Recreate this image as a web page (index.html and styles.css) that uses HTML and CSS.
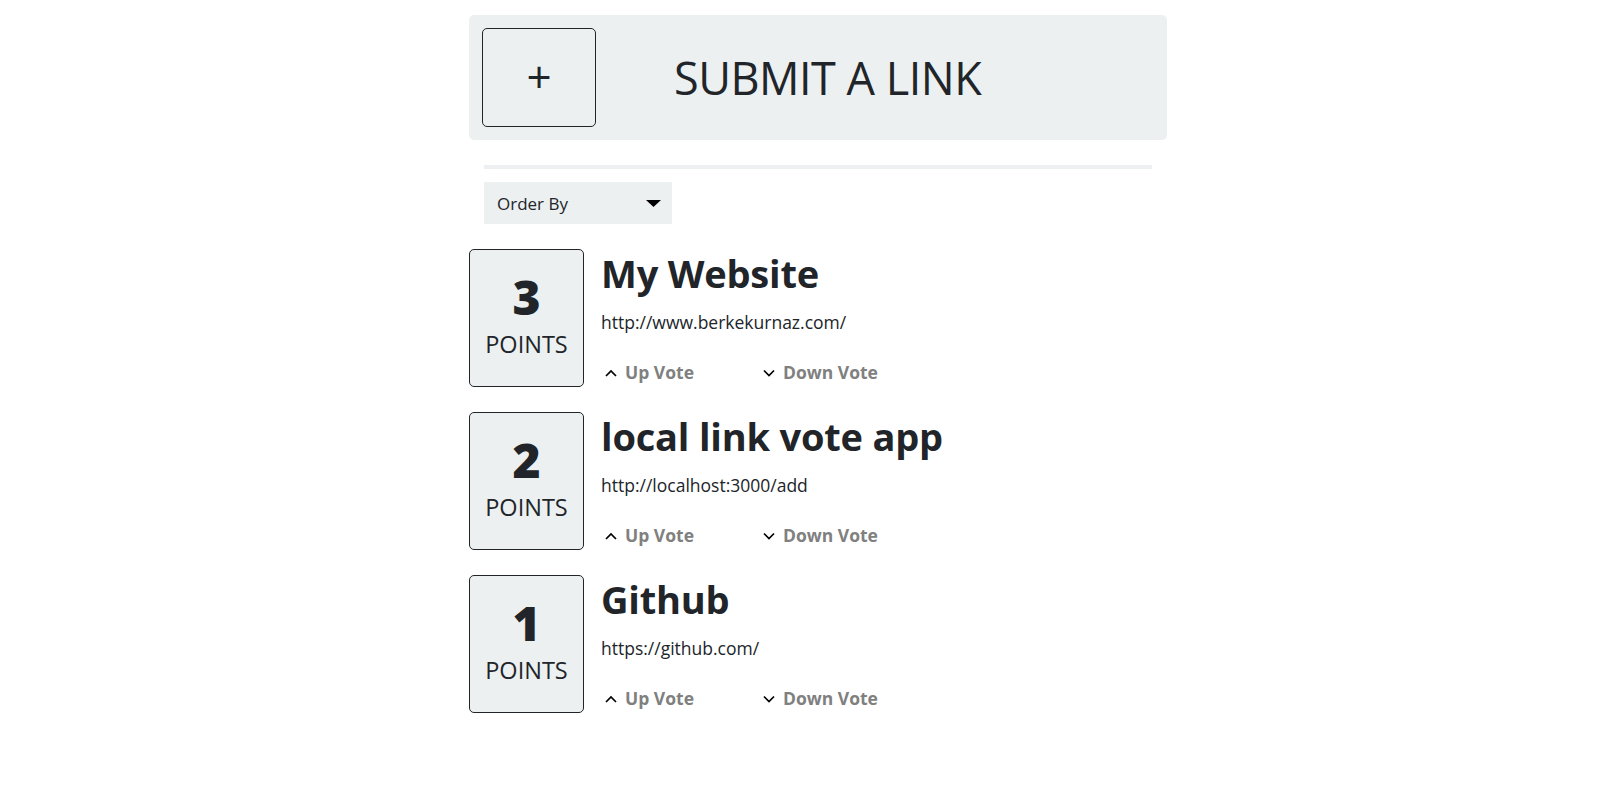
FILE: index.html
```html
<!DOCTYPE html>
<html lang="en">
<head>
<meta charset="utf-8">
<title>Link Vote</title>
<link rel="stylesheet" href="styles.css">
</head>
<body>
<main class="page">
  <section class="banner">
    <div class="plus-box">+</div>
    <h2 class="banner-title">SUBMIT A LINK</h2>
  </section>
  <hr class="divider">
  <div class="order">
    <span>Order By</span>
    <svg class="caret" width="15" height="7" viewBox="0 0 15 7"><polygon points="0,0 15,0 7.5,7" fill="#000"/></svg>
  </div>
  <ul class="list">
    <li class="item">
      <div class="score"><span class="num">3</span><span class="label">POINTS</span></div>
      <div class="details">
        <h1 class="title">My Website</h1>
        <div class="url">http://www.berkekurnaz.com/</div>
        <div class="votes">
          <span class="vote"><svg width="12" height="8" viewBox="0 0 12 8"><polyline points="1,7 6,2 11,7" fill="none" stroke="#000" stroke-width="1.7"/></svg>Up Vote</span>
          <span class="vote"><svg width="12" height="8" viewBox="0 0 12 8"><polyline points="1,1.5 6,6.5 11,1.5" fill="none" stroke="#000" stroke-width="1.7"/></svg>Down Vote</span>
        </div>
      </div>
    </li>
    <li class="item">
      <div class="score"><span class="num">2</span><span class="label">POINTS</span></div>
      <div class="details">
        <h1 class="title">local link vote app</h1>
        <div class="url">http://localhost:3000/add</div>
        <div class="votes">
          <span class="vote"><svg width="12" height="8" viewBox="0 0 12 8"><polyline points="1,7 6,2 11,7" fill="none" stroke="#000" stroke-width="1.7"/></svg>Up Vote</span>
          <span class="vote"><svg width="12" height="8" viewBox="0 0 12 8"><polyline points="1,1.5 6,6.5 11,1.5" fill="none" stroke="#000" stroke-width="1.7"/></svg>Down Vote</span>
        </div>
      </div>
    </li>
    <li class="item">
      <div class="score"><span class="num">1</span><span class="label">POINTS</span></div>
      <div class="details">
        <h1 class="title">Github</h1>
        <div class="url">https://github.com/</div>
        <div class="votes">
          <span class="vote"><svg width="12" height="8" viewBox="0 0 12 8"><polyline points="1,7 6,2 11,7" fill="none" stroke="#000" stroke-width="1.7"/></svg>Up Vote</span>
          <span class="vote"><svg width="12" height="8" viewBox="0 0 12 8"><polyline points="1,1.5 6,6.5 11,1.5" fill="none" stroke="#000" stroke-width="1.7"/></svg>Down Vote</span>
        </div>
      </div>
    </li>
  </ul>
</main>
</body>
</html>
```
FILE: styles.css
```css
* { box-sizing: border-box; }
html, body { margin: 0; padding: 0; background: #fff; }
body {
  font-family: "Open Sans", "Noto Sans", sans-serif;
  color: #212529;
  font-size: 16px;
}
.page {
  width: 698px;
  margin: 15px 0 0 calc(50% - 337.5px);
}
.banner {
  height: 125px;
  background: #ecf0f1;
  border-radius: 5px;
  padding: 13px;
  display: flex;
  align-items: center;
}
.plus-box {
  width: 114px;
  height: 99px;
  border: 1px solid #212529;
  border-radius: 5px;
  display: flex;
  align-items: center;
  justify-content: center;
  font-size: 44px;
  font-weight: 500;
  line-height: 1;
  padding-bottom: 4px;
}
.banner-title {
  margin: 0 0 0 78px;
  font-size: 45px;
  font-weight: 400;
  line-height: 1.2;
  letter-spacing: -0.5px;
}
.divider {
  border: 0;
  height: 4px;
  background: #ecf0f1;
  margin: 25px 15px 0;
}
.order {
  margin: 13px 0 0 15px;
  width: 188px;
  height: 42px;
  background: #ecf0f1;
  display: flex;
  align-items: center;
  justify-content: space-between;
  padding: 0 11px 0 13px;
  font-size: 17px;
}
.caret { display: block; }
.list {
  list-style: none;
  margin: 25px 0 0;
  padding: 0;
}
.item {
  display: flex;
  gap: 17px;
  margin-bottom: 25px;
}
.score {
  width: 115px;
  height: 138px;
  flex: none;
  border: 1px solid #212529;
  border-radius: 5px;
  background: #ecf0f1;
  display: flex;
  flex-direction: column;
  align-items: center;
  justify-content: center;
}
.num {
  font-size: 48px;
  font-weight: 800;
  line-height: 40px;
  margin-bottom: 12px;
}
.label {
  font-size: 23.5px;
  line-height: 30px;
}
.details { display: flex; flex-direction: column; }
.title {
  margin: 0;
  font-size: 38px;
  font-weight: 700;
  line-height: 48px;
  letter-spacing: -0.2px;
}
.url {
  margin-top: 13px;
  font-size: 17.5px;
  line-height: 24px;
}
.votes {
  display: flex;
  margin-top: 26px;
}
.vote {
  width: 158px;
  padding-left: 4px;
  display: flex;
  align-items: center;
  gap: 8px;
  font-size: 17.5px;
  font-weight: 700;
  line-height: 24px;
  color: #808080;
}
.vote svg { flex: none; margin-top: 2px; }
```
